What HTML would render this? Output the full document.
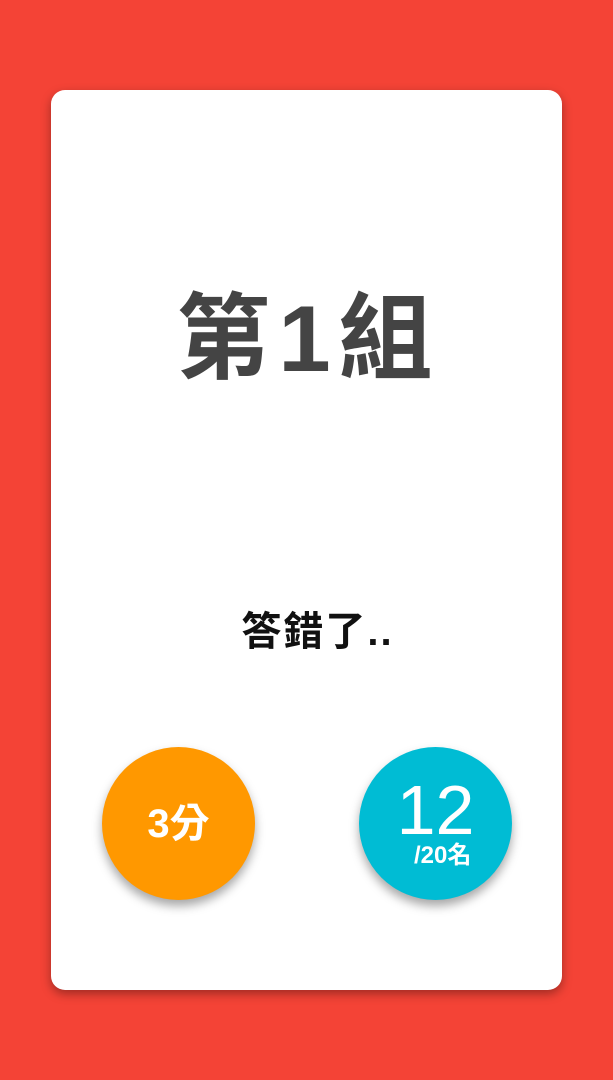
<!DOCTYPE html>
<html><head><meta charset="utf-8"><style>
html,body{margin:0;padding:0}
body{width:613px;height:1080px;background:#f44336;position:relative;overflow:hidden;font-family:"Liberation Sans","Noto Sans CJK TC",sans-serif}
.card{position:absolute;left:51px;top:90px;width:511px;height:900px;background:#fff;border-radius:14px;box-shadow:0 4px 10px rgba(0,0,0,0.35)}
.title{position:absolute;left:2px;width:613px;top:279px;text-align:center;font-size:94px;font-weight:bold;color:#444;line-height:120px;letter-spacing:8px}
.msg{position:absolute;left:11px;width:613px;top:604px;text-align:center;font-size:40px;font-weight:bold;color:#111;line-height:56px;letter-spacing:2px}
.c{position:absolute;width:153px;height:153px;border-radius:50%;top:747px;color:#fff;box-shadow:0 6px 10px rgba(0,0,0,0.35)}
.o{left:102px;background:#ff9800}
.b{left:359px;background:#00bcd4}
.o span{position:absolute;left:0;width:153px;top:52px;text-align:center;font-size:40px;font-weight:bold;line-height:50px}
.b .n{position:absolute;left:0;width:153px;top:23px;text-align:center;font-size:70px;line-height:80px}
.b .s{position:absolute;left:55px;top:95px;font-size:24px;font-weight:bold;line-height:28px}
</style></head><body>
<div class="card"></div>
<div class="title">第1組</div>
<div class="msg">答錯了..</div>
<div class="c o"><span>3分</span></div>
<div class="c b"><div class="n">12</div><div class="s">/20名</div></div>
</body></html>
